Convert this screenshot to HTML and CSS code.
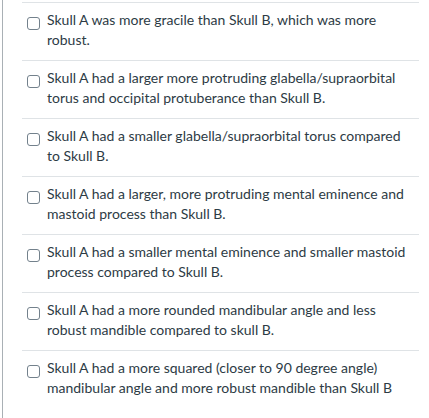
FILE: index.html
```html
<!DOCTYPE html>
<html>
<head>
<meta charset="utf-8">
<link rel="stylesheet" href="styles.css">
</head>
<body>
<div class="list">
  <div class="item"><span class="cb"></span><span class="label">Skull A was more gracile than Skull B, which was more robust.</span></div>
  <div class="item"><span class="cb"></span><span class="label">Skull A had a larger more protruding glabella/supraorbital torus and occipital protuberance than Skull B.</span></div>
  <div class="item"><span class="cb"></span><span class="label">Skull A had a smaller glabella/supraorbital torus compared to Skull B.</span></div>
  <div class="item"><span class="cb"></span><span class="label">Skull A had a larger, more protruding mental eminence and mastoid process than Skull B.</span></div>
  <div class="item"><span class="cb"></span><span class="label">Skull A had a smaller mental eminence and smaller mastoid process compared to Skull B.</span></div>
  <div class="item"><span class="cb"></span><span class="label">Skull A had a more rounded mandibular angle and less robust mandible compared to skull B.</span></div>
  <div class="item"><span class="cb"></span><span class="label">Skull A had a more squared (closer to 90 degree angle) mandibular angle and more robust mandible than Skull B</span></div>
</div>
</body>
</html>
```
FILE: styles.css
```css
html, body {
  margin: 0;
  padding: 0;
  background: #ffffff;
}
body {
  font-family: Lato, "Liberation Sans", sans-serif;
  font-size: 14px;
  color: #2d3b45;
}
.list {
  margin-left: 2px;
  border-left: 1px solid #a9b0b5;
  height: 416px;
  padding-top: 2px;
  padding-left: 19px;
  width: 397px;
}
.item {
  border-top: 1px solid #dfe3e6;
  display: flex;
  align-items: flex-start;
  padding: 7px 0 10px 5px;
  line-height: 20px;
}
.cb {
  flex: none;
  width: 11px;
  height: 11px;
  border: 1px solid #73818c;
  border-radius: 3px;
  margin-top: 7px;
  margin-right: 7px;
  background: #fff;
}
.label {
  flex: 1;
  padding-right: 8px;
}
```
